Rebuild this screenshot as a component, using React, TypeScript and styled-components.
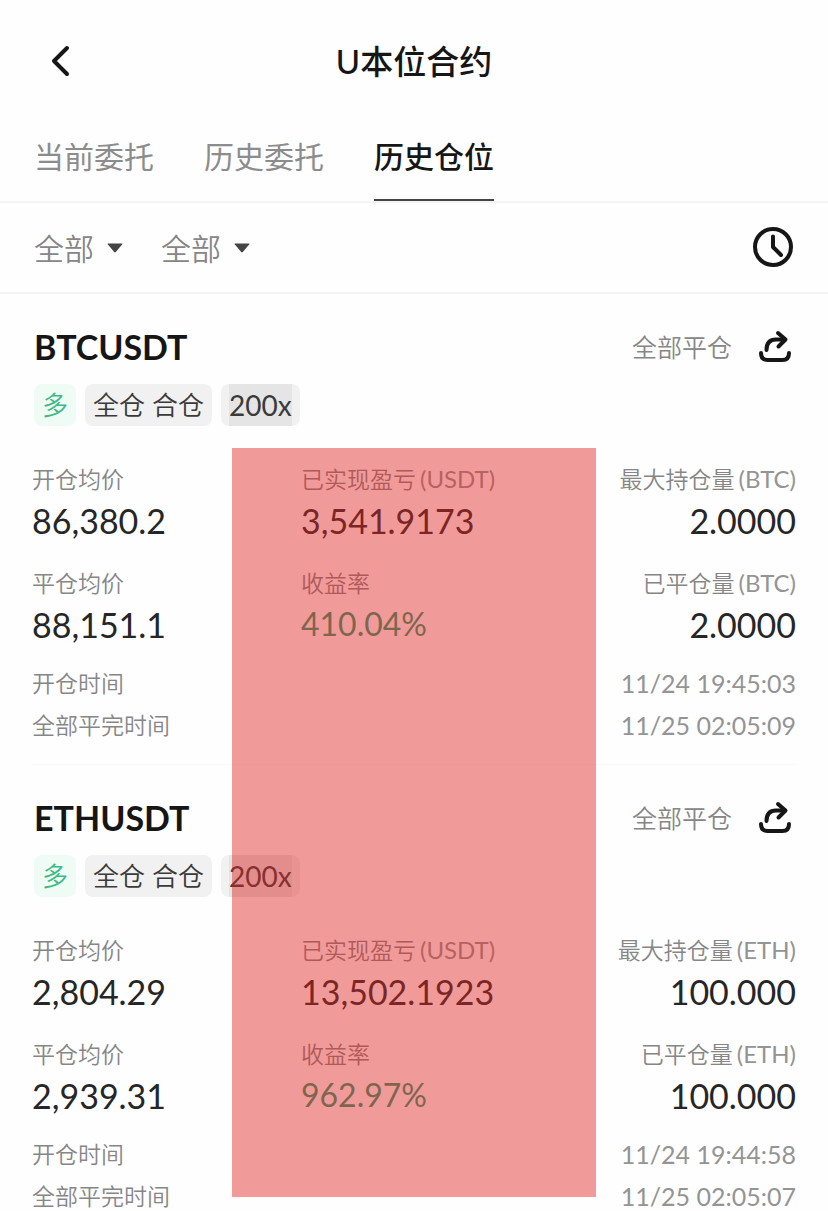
import React from "react";
import styled, { createGlobalStyle } from "styled-components";

const latin = `Lato, "Noto Sans CJK SC", sans-serif`;

const GlobalStyle = createGlobalStyle`
  *, *::before, *::after { box-sizing: border-box; }
  body { margin: 0; background: #fefefe; color: #161616; font-family: ${latin}; }
  button, select { font: inherit; color: inherit; border: 0; background: none; padding: 0; margin: 0; cursor: pointer; }
  svg { display: block; }
  h1, h2, dl, dd, p { margin: 0; }
`;

const Screen = styled.div`
  display: flex;
  flex-direction: column;
  height: 100vh;
  overflow: hidden;
`;

const Header = styled.header`
  display: grid;
  grid-template-columns: 60px 1fr 60px;
  align-items: center;
  flex: none;
  height: 121px;
  padding: 0 32px;
`;

const BackButton = styled.button`
  display: flex;
  justify-content: center;
  width: 56px;
`;

const Title = styled.h1`
  font-size: 33px;
  line-height: 40px;
  font-weight: 500;
  text-align: center;
`;

const Tabs = styled.nav`
  display: flex;
  flex: none;
  gap: 50px;
  height: 82px;
  padding: 0 34px;
  border-bottom: 2px solid #f4f4f4;
`;

const Tab = styled.a<{ $active?: boolean }>`
  height: 80px;
  padding-top: 15px;
  font-size: 30px;
  line-height: 40px;
  font-weight: ${(p) => (p.$active ? 500 : 400)};
  color: ${(p) => (p.$active ? "#161616" : "#8c8c8c")};
  border-bottom: 2px solid ${(p) => (p.$active ? "#444" : "transparent")};
  text-decoration: none;
`;

const FilterBar = styled.div`
  display: flex;
  align-items: center;
  flex: none;
  gap: 38px;
  height: 91px;
  padding: 0 34px;
  border-bottom: 2px solid #f4f4f4;
`;

const Filter = styled.label`
  display: flex;
  align-items: center;
  gap: 12px;
  color: #868686;
`;

const FilterSelect = styled.select`
  appearance: none;
  width: 61px;
  font-size: 30px;
  line-height: 40px;
  font-weight: 350;
`;

const HistoryButton = styled.button`
  margin-left: auto;
`;

const Scroller = styled.main`
  flex: 1;
  min-height: 0;
  overflow-y: auto;
  scrollbar-width: none;
`;

const List = styled.div`
  position: relative;
`;

const Card = styled.article`
  height: 471px;
  margin: 0 32px;
  padding-top: 32px;
  border-bottom: 1px solid #fafafa;
`;

const CardHead = styled.div`
  display: flex;
  align-items: center;
  height: 42px;
  padding: 0 4px 0 2px;
`;

const Symbol = styled.h2`
  font-size: 34px;
  line-height: 42px;
  font-weight: 700;
`;

const Status = styled.span`
  margin-left: auto;
  font-size: 25px;
  font-weight: 350;
  line-height: 40px;
  color: #868686;
`;

const ShareButton = styled.button`
  margin-left: 26px;
`;

const Chips = styled.div`
  display: flex;
  gap: 9px;
  margin-top: 16px;
  padding: 0 2px;
`;

const Chip = styled.span<{ $tone?: "long" }>`
  padding: 0 8px;
  border-radius: 8px;
  font-size: 26px;
  font-weight: 350;
  line-height: 42px;
  color: ${(p) => (p.$tone ? "#3fba87" : "#3a3a3a")};
  background: ${(p) => (p.$tone ? "#effcf6" : "#f1f1f1")};
`;

const Leverage = styled.span`
  display: block;
  font-size: 28px;
  font-weight: 400;
  background: #e5e5e5;
`;

const Stats = styled.dl`
  display: grid;
  grid-template-columns: 269px 1fr auto;
  row-gap: 18px;
  margin-top: 35px;
`;

const Stat = styled.div<{ $end?: boolean }>`
  text-align: ${(p) => (p.$end ? "right" : "left")};
`;

const Label = styled.dt`
  font-size: 23px;
  font-weight: 350;
  line-height: 36px;
  color: #868686;
`;

const Unit = styled.span`
  margin-left: 4px;
  font-size: 24px;
  font-weight: 400;
  color: #949494;
`;

const Value = styled.dd<{ $muted?: boolean }>`
  height: 50px;
  font-size: ${(p) => (p.$muted ? 32 : 34)}px;
  line-height: ${(p) => (p.$muted ? 46 : 48)}px;
  color: ${(p) => (p.$muted ? "#2b9c72" : "#262626")};
`;

const Times = styled.dl`
  margin-top: 12px;
`;

const TimeRow = styled.div`
  display: flex;
  justify-content: space-between;
  height: 42px;
  font-size: 23px;
  font-weight: 350;
  line-height: 40px;
  color: #868686;
`;

const TimeValue = styled.dd`
  font-size: 25px;
  font-weight: 400;
  color: #949494;
`;

const Highlight = styled.div`
  position: absolute;
  top: 154px;
  bottom: 39px;
  left: 28%;
  width: 44%;
  background: rgba(224, 40, 36, 0.46);
  pointer-events: none;
`;

const Caret = () => (
  <svg width="16" height="10" viewBox="0 0 16 10" aria-hidden="true">
    <path d="M1 0.5h14q.8 0 .3.7L8.800 9q-.8.8-1.600 0L.7 1.200Q.2.5 1 .5Z" fill="#444" />
  </svg>
);

const ShareIcon = () => (
  <svg width="34" height="34" viewBox="0 0 34 34" fill="none" stroke="#161616" strokeWidth="4" strokeLinecap="round" strokeLinejoin="round" aria-hidden="true">
    <path d="M3 23q0 7 6.500 7h15q6.500 0 6.500-7" />
    <path d="M8.500 20C8.500 13 12 9.500 18 9.500h9" />
    <path d="M20 3l7.500 6.500-7 7" />
  </svg>
);

type Position = {
  symbol: string;
  coin: string;
  open: string;
  close: string;
  pnl: string;
  rate: string;
  size: string;
  opened: string;
  closed: string;
};

const positions: Position[] = [
  { symbol: "BTCUSDT", coin: "BTC", open: "86,380.2", close: "88,151.1", pnl: "3,541.9173", rate: "410.04%", size: "2.0000", opened: "11/24 19:45:03", closed: "11/25 02:05:09" },
  { symbol: "ETHUSDT", coin: "ETH", open: "2,804.29", close: "2,939.31", pnl: "13,502.1923", rate: "962.97%", size: "100.000", opened: "11/24 19:44:58", closed: "11/25 02:05:07" },
];

type FieldProps = { label: string; unit?: string; value: string; end?: boolean; muted?: boolean };

const Field = ({ label, unit, value, end, muted }: FieldProps) => (
  <Stat $end={end}>
    <Label>{label}{unit && <Unit>({unit})</Unit>}</Label>
    <Value $muted={muted}>{value}</Value>
  </Stat>
);

const PositionCard = ({ p }: { p: Position }) => (
  <Card>
    <CardHead>
      <Symbol>{p.symbol}</Symbol>
      <Status>全部平仓</Status>
      <ShareButton aria-label="分享"><ShareIcon /></ShareButton>
    </CardHead>
    <Chips>
      <Chip $tone="long">多</Chip>
      <Chip>全仓 合仓</Chip>
      <Chip><Leverage>200x</Leverage></Chip>
    </Chips>
    <Stats>
      <Field label="开仓均价" value={p.open} />
      <Field label="已实现盈亏" unit="USDT" value={p.pnl} />
      <Field label="最大持仓量" unit={p.coin} value={p.size} end />
      <Field label="平仓均价" value={p.close} />
      <Field label="收益率" value={p.rate} muted />
      <Field label="已平仓量" unit={p.coin} value={p.size} end />
    </Stats>
    <Times>
      <TimeRow><dt>开仓时间</dt><TimeValue>{p.opened}</TimeValue></TimeRow>
      <TimeRow><dt>全部平完时间</dt><TimeValue>{p.closed}</TimeValue></TimeRow>
    </Times>
  </Card>
);

export default function App() {
  return (
    <Screen>
      <GlobalStyle />
      <Header>
        <BackButton aria-label="返回">
          <svg width="20" height="32" viewBox="0 0 20 32" fill="none" stroke="#161616" strokeWidth="4" strokeLinecap="round" strokeLinejoin="round" aria-hidden="true">
            <path d="M17 3L4 16l13 13" />
          </svg>
        </BackButton>
        <Title>U本位合约</Title>
      </Header>
      <Tabs>
        <Tab href="#open">当前委托</Tab>
        <Tab href="#orders">历史委托</Tab>
        <Tab href="#positions" $active aria-current="page">历史仓位</Tab>
      </Tabs>
      <FilterBar>
        <Filter><FilterSelect aria-label="合约"><option>全部</option></FilterSelect><Caret /></Filter>
        <Filter><FilterSelect aria-label="类型"><option>全部</option></FilterSelect><Caret /></Filter>
        <HistoryButton aria-label="时间">
          <svg width="42" height="42" viewBox="0 0 42 42" fill="none" stroke="#161616" strokeWidth="4" strokeLinecap="round" strokeLinejoin="round" aria-hidden="true">
            <circle cx="21" cy="20" r="18" />
            <path d="M21 9.500V20l8 8" />
          </svg>
        </HistoryButton>
      </FilterBar>
      <Scroller>
        <List>
          {positions.map((p) => <PositionCard key={p.symbol} p={p} />)}
          <Highlight />
        </List>
      </Scroller>
    </Screen>
  );
}
